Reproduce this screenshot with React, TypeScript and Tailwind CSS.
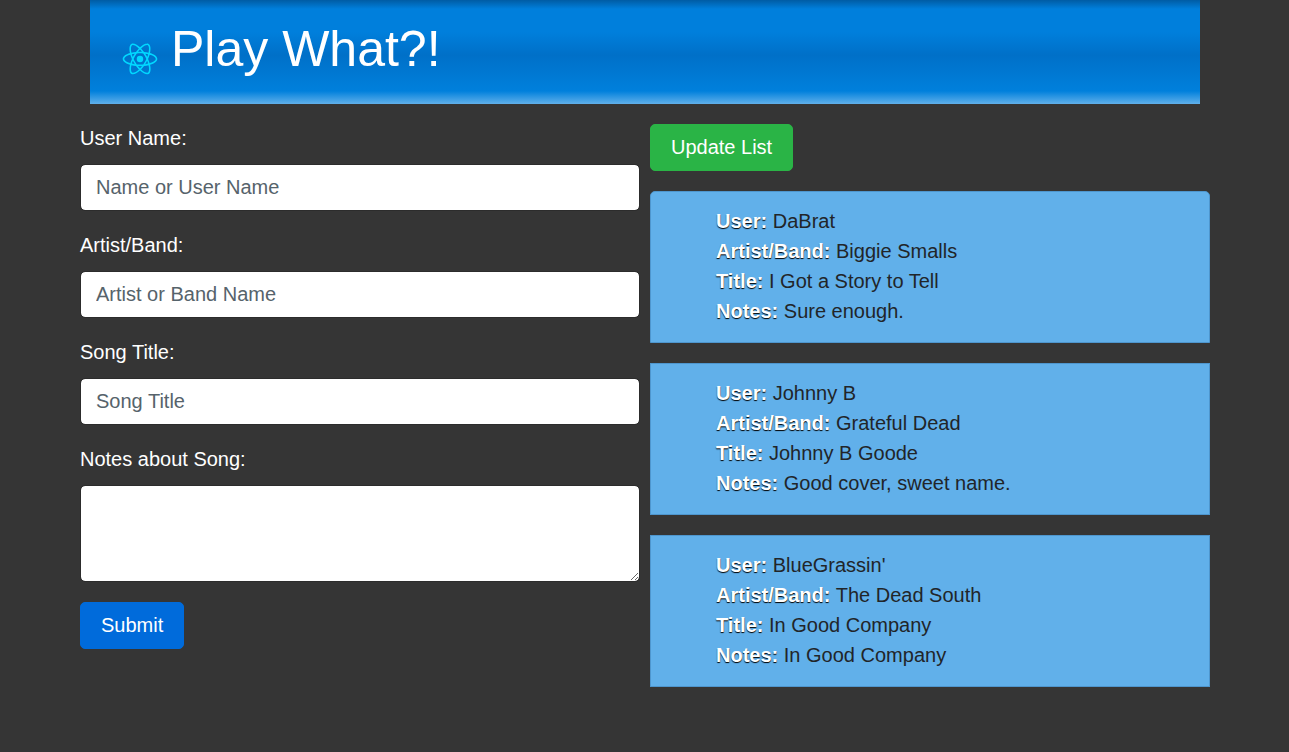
import React from "react";

type Song = { user: string; artist: string; title: string; notes: string };

const songs: Song[] = [
  { user: "DaBrat", artist: "Biggie Smalls", title: "I Got a Story to Tell", notes: "Sure enough." },
  { user: "Johnny B", artist: "Grateful Dead", title: "Johnny B Goode", notes: "Good cover, sweet name." },
  { user: "BlueGrassin'", artist: "The Dead South", title: "In Good Company", notes: "In Good Company" },
];

const fields = [
  { id: "user", label: "User Name:", placeholder: "Name or User Name" },
  { id: "artist", label: "Artist/Band:", placeholder: "Artist or Band Name" },
  { id: "title", label: "Song Title:", placeholder: "Song Title" },
];

function ReactLogo() {
  return (
    <svg viewBox="0 0 841.9 595.3" className="h-[42px] w-[60px] shrink-0" fill="#00d8ff" aria-hidden="true">
      <path d="M666.3 296.5c0-32.5-40.7-63.3-103.1-82.4 14.4-63.6 8-114.2-20.2-130.4-6.5-3.8-14.1-5.6-22.4-5.6v22.3c4.6 0 8.3.9 11.4 2.6 13.6 7.8 19.5 37.5 14.9 75.7-1.1 9.4-2.9 19.3-5.1 29.4-19.6-4.8-41-8.5-63.5-10.9-13.5-18.5-27.5-35.3-41.6-50 32.6-30.3 63.2-46.9 84-46.9V78c-27.5 0-63.5 19.6-99.9 53.6-36.4-33.8-72.4-53.2-99.9-53.2v22.3c20.7 0 51.4 16.5 84 46.6-14 14.7-28 31.4-41.3 49.9-22.6 2.4-44 6.1-63.6 11-2.3-10-4-19.7-5.2-29-4.7-38.2 1.1-67.9 14.6-75.8 3-1.8 6.9-2.6 11.5-2.6V78.5c-8.4 0-16 1.8-22.6 5.6-28.1 16.2-34.4 66.7-19.9 130.1-62.2 19.2-102.7 49.9-102.7 82.3 0 32.5 40.7 63.3 103.1 82.4-14.4 63.6-8 114.2 20.2 130.4 6.5 3.8 14.1 5.6 22.5 5.6 27.5 0 63.5-19.6 99.9-53.6 36.4 33.8 72.4 53.2 99.9 53.2 8.4 0 16-1.8 22.6-5.6 28.1-16.2 34.4-66.7 19.9-130.1 62-19.1 102.5-49.9 102.5-82.3zm-130.2-66.7c-3.7 12.9-8.3 26.2-13.5 39.5-4.1-8-8.4-16-13.1-24-4.6-8-9.5-15.8-14.4-23.4 14.2 2.1 27.9 4.7 41 7.9zm-45.8 106.5c-7.8 13.5-15.8 26.3-24.1 38.2-14.9 1.3-30 2-45.2 2-15.1 0-30.2-.7-45-1.9-8.3-11.9-16.4-24.6-24.2-38-7.6-13.1-14.5-26.4-20.8-39.8 6.2-13.4 13.2-26.8 20.7-39.9 7.8-13.5 15.8-26.3 24.1-38.2 14.9-1.3 30-2 45.2-2 15.1 0 30.2.7 45 1.9 8.3 11.9 16.4 24.6 24.2 38 7.6 13.1 14.5 26.4 20.8 39.8-6.3 13.4-13.2 26.8-20.7 39.9zm32.3-13c5.4 13.4 10 26.8 13.8 39.8-13.1 3.2-26.9 5.9-41.2 8 4.9-7.7 9.8-15.6 14.4-23.7 4.6-8 8.9-16.1 13-24.1zM421.2 430c-9.3-9.6-18.6-20.3-27.8-32 9 .4 18.2.7 27.5.7 9.4 0 18.7-.2 27.8-.7-9 11.7-18.3 22.4-27.5 32zm-74.4-58.9c-14.2-2.1-27.9-4.7-41-7.9 3.7-12.9 8.3-26.2 13.5-39.5 4.1 8 8.4 16 13.1 24 4.7 8 9.5 15.8 14.4 23.4zM420.7 163c9.3 9.6 18.6 20.3 27.8 32-9-.4-18.2-.7-27.5-.7-9.4 0-18.7.2-27.8.7 9-11.7 18.3-22.4 27.5-32zm-74 58.9c-4.9 7.7-9.8 15.6-14.4 23.7-4.6 8-8.9 16-13 24-5.4-13.4-10-26.8-13.8-39.8 13.1-3.1 26.9-5.8 41.2-7.9zm-90.5 125.2c-35.4-15.1-58.3-34.9-58.3-50.6 0-15.7 22.9-35.6 58.3-50.6 8.6-3.7 18-7 27.7-10.1 5.7 19.6 13.2 40 22.5 60.9-9.2 20.8-16.6 41.1-22.2 60.6-9.9-3.1-19.3-6.5-28-10.2zM310 490c-13.6-7.8-19.5-37.5-14.9-75.7 1.1-9.4 2.9-19.3 5.1-29.4 19.6 4.8 41 8.5 63.5 10.9 13.5 18.5 27.5 35.3 41.6 50-32.6 30.3-63.2 46.9-84 46.9-4.5-.1-8.3-1-11.3-2.7zm237.2-76.2c4.7 38.2-1.1 67.9-14.6 75.8-3 1.8-6.9 2.6-11.5 2.6-20.7 0-51.4-16.5-84-46.6 14-14.7 28-31.4 41.3-49.9 22.6-2.4 44-6.1 63.6-11 2.3 10.1 4.1 19.8 5.2 29.1zm38.5-66.7c-8.6 3.7-18 7-27.7 10.1-5.7-19.6-13.2-40-22.5-60.9 9.2-20.8 16.6-41.1 22.2-60.6 9.9 3.1 19.3 6.5 28.1 10.2 35.4 15.1 58.3 34.9 58.3 50.6-.1 15.7-23 35.6-58.4 50.6z" />
      <circle cx="420.9" cy="296.5" r="45.7" />
    </svg>
  );
}

function Line({ name, value }: { name: string; value: string }) {
  return (
    <li>
      <strong className="font-bold text-white [text-shadow:0px_1px_1px_#000]">{name}:</strong> {value}
    </li>
  );
}

export default function App() {
  return (
    <div className="min-h-screen bg-[#353535] pl-px font-['Liberation_Sans',Arial,sans-serif] text-xl leading-[30px] text-[#212529]">
      <div className="mx-auto max-w-[1130px]">
        <header className="mx-[10px] flex items-end gap-px bg-[linear-gradient(to_bottom,#005ca4_0px,#007fdc_9px,#007fdc_32px,#0070c8_55px,#0080dc_91px,#61b0ea_104px)] px-5 pt-[19px] pb-6">
          <ReactLogo />
          <h1 className="pb-px text-[50px] leading-[60px] font-normal text-white">Play What?!</h1>
        </header>
        <main className="mt-5 grid grid-cols-2 gap-[10px]">
          <form className="flex flex-col gap-5" onSubmit={(e) => e.preventDefault()}>
            {fields.map((f) => (
              <div key={f.id} className="flex flex-col gap-3">
                <label htmlFor={f.id} className="leading-7 text-white">{f.label}</label>
                <input
                  id={f.id}
                  type="text"
                  placeholder={f.placeholder}
                  className="h-[47px] w-full rounded-[5px] border border-[#2c2c2c] bg-white bg-clip-padding px-[15px] placeholder:text-[#56636b]"
                />
              </div>
            ))}
            <div className="flex flex-col gap-3">
              <label htmlFor="notes" className="leading-7 text-white">Notes about Song:</label>
              <textarea
                id="notes"
                className="h-[97px] w-full resize rounded-[5px] border border-[#2c2c2c] bg-white bg-clip-padding px-[15px] py-2"
              />
            </div>
            <button type="submit" className="self-start rounded-[5px] border border-[#006bdb] bg-[#006bdb] px-5 py-2 leading-[29px] text-white">
              Submit
            </button>
          </form>
          <section className="flex flex-col items-start gap-5">
            <button type="button" className="rounded-[5px] border border-[#2ab446] bg-[#2ab446] px-5 py-2 leading-[29px] text-white">
              Update List
            </button>
            {songs.map((s) => (
              <ul
                key={s.user}
                className="w-full border border-[#4e96ce] bg-[#61b0ea] pt-[14px] pr-[25px] pb-4 pl-[65px] first-of-type:rounded-t-[5px]"
              >
                <Line name="User" value={s.user} />
                <Line name="Artist/Band" value={s.artist} />
                <Line name="Title" value={s.title} />
                <Line name="Notes" value={s.notes} />
              </ul>
            ))}
          </section>
        </main>
      </div>
    </div>
  );
}
